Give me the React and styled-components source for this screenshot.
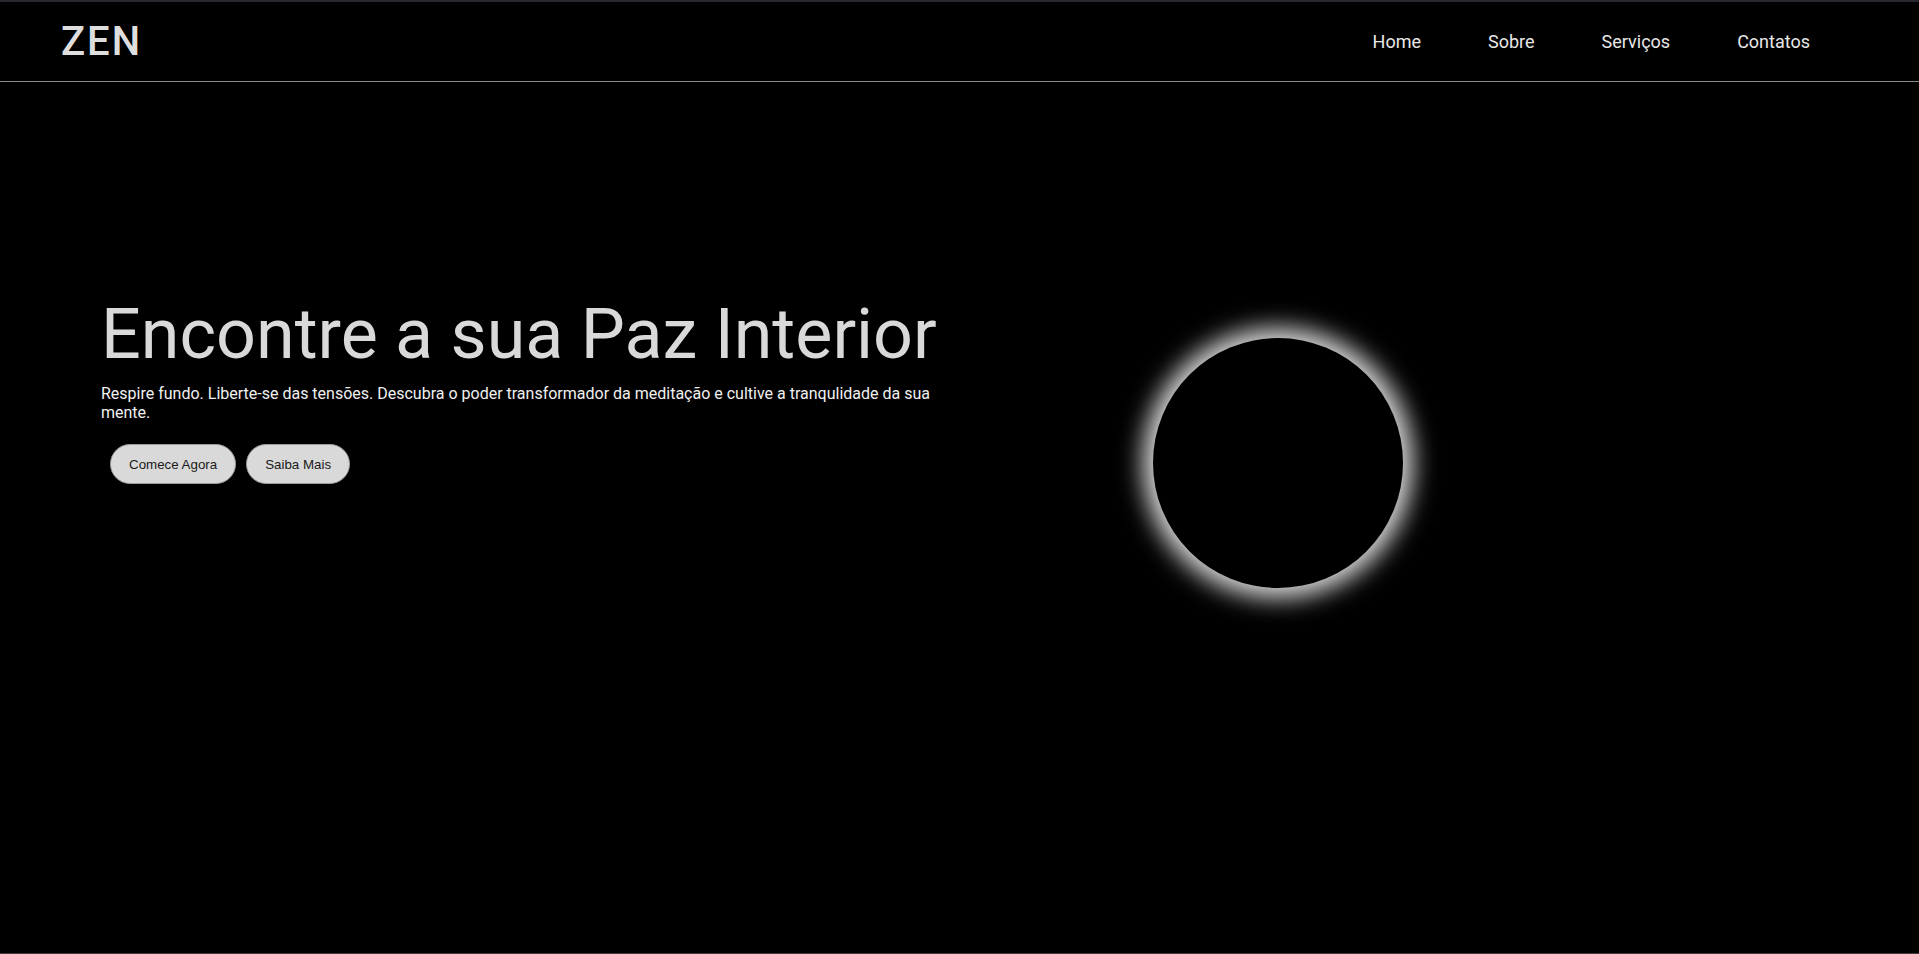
import React from 'react'
import styled, { createGlobalStyle } from 'styled-components'

const GlobalStyle = createGlobalStyle`
    * {
        box-sizing: border-box;
    }
    html, body {
        margin: 0;
        padding: 0;
        background: #000;
    }
    body {
        font-family: Roboto, "Liberation Sans", Arial, sans-serif;
        color: #e6e6e6;
    }
`

const links = ['Home', 'Sobre', 'Serviços', 'Contatos']

function App() {
    return (
        <Page>
            <GlobalStyle />
            <Header>
                <Logo>ZEN</Logo>
                <Nav>
                    {links.map(l => (
                        <NavLink key={l} href="#">{l}</NavLink>
                    ))}
                </Nav>
            </Header>
            <Hero>
                <TextBox>
                    <Title>Encontre a sua Paz Interior</Title>
                    <Lead>
                        Respire fundo. Liberte-se das tensões. Descubra o poder transformador da meditação e cultive a tranqulidade da sua mente.
                    </Lead>
                    <Buttons>
                        <Button>Comece Agora</Button>
                        <Button>Saiba Mais</Button>
                    </Buttons>
                </TextBox>
                <Eclipse />
            </Hero>
        </Page>
    )
}
export default App

const Page = styled.div`
    height: 100vh;
    display: flex;
    flex-direction: column;
    background: #000;
    border-top: 2px solid #25282c;
    border-bottom: 1px solid #3a3a3a;
    overflow: hidden;
`
const Header = styled.header`
    height: 80px;
    flex-shrink: 0;
    display: flex;
    align-items: center;
    justify-content: space-between;
    padding: 0 109px 0 61px;
    border-bottom: 1px solid #8a8a8a;
`
const Logo = styled.h2`
    margin: 0;
    font-size: 40px;
    font-weight: 500;
    letter-spacing: 2px;
    color: #dedede;
`
const Nav = styled.nav`
    display: flex;
    align-items: center;
    gap: 67px;
`
const NavLink = styled.a`
    font-size: 18px;
    color: #e8e8e8;
    text-decoration: none;
`
const Hero = styled.main`
    flex: 1;
    display: flex;
    align-items: flex-start;
    padding: 211px 0 0 101px;
`
const TextBox = styled.section`
    width: 850px;
    display: flex;
    flex-direction: column;
`
const Title = styled.h1`
    margin: 0;
    font-size: 70px;
    font-weight: 400;
    line-height: normal;
    white-space: nowrap;
    color: #d9d9d9;
`
const Lead = styled.p`
    margin: 9px 0 0;
    font-size: 16px;
    line-height: normal;
    color: #f0f0f0;
`
const Buttons = styled.div`
    display: flex;
    gap: 10px;
    margin: 22px 0 0 9px;
`
const Button = styled.button`
    height: 40px;
    padding: 0 18px;
    border: 1px solid #9a9a9a;
    border-radius: 20px;
    background: #d9d9d9;
    color: #1a1a1a;
    font-family: "Liberation Sans", Arial, sans-serif;
    font-size: 13.33px;
    cursor: pointer;
`
const Eclipse = styled.div`
    width: 250px;
    height: 250px;
    flex-shrink: 0;
    margin: 45px 0 0 202px;
    border-radius: 50%;
    background: #000;
    box-shadow: 0 0 25px 10px #dcdcdc;
`
